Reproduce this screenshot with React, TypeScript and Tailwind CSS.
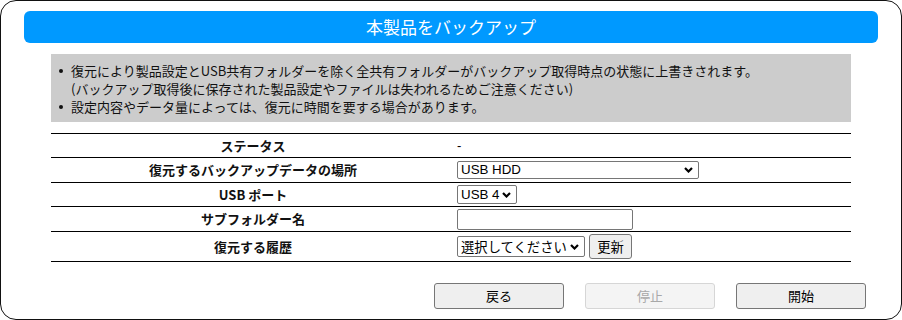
import { ReactNode } from "react"

const jp = "font-['Noto_Sans_CJK_JP',sans-serif]"
const ctl = "font-['Liberation_Sans','Noto_Sans_CJK_JP',sans-serif] text-[13.33px] text-black"

function Chevron() {
    return (
        <svg width="9" height="6" viewBox="0 0 9 6" className="shrink-0">
            <path d="M1 1 L4.5 4.5 L8 1" fill="none" stroke="#000" strokeWidth="2.2" />
        </svg>
    )
}

function FakeSelect({ value, width, height }: { value: string; width: string; height: string }) {
    return (
        <div className={`${width} ${height} ${ctl} flex items-center justify-between border border-[#767676] rounded-[2px] bg-white pl-[3px] pr-[5px] leading-none`}>
            <span className="whitespace-nowrap">{value}</span>
            <Chevron />
        </div>
    )
}

function Row({ label, h, children }: { label: string; h: string; children: ReactNode }) {
    return (
        <div className={`flex items-center border-b border-black ${h}`}>
            <div className="w-[404px] text-center text-[13px] font-bold">{label}</div>
            <div className="flex items-center gap-[4px] pl-[2px]">{children}</div>
        </div>
    )
}

export default function App() {
    const notes = [
        ["復元により製品設定とUSB共有フォルダーを除く全共有フォルダーがバックアップ取得時点の状態に上書きされます。", "(バックアップ取得後に保存された製品設定やファイルは失われるためご注意ください)"],
        ["設定内容やデータ量によっては、復元に時間を要する場合があります。"],
    ]

    return (
        <div className={`w-[902px] h-[320px] bg-white ${jp} text-[#111]`}>
            <div className="w-[902px] h-[320px] border border-[#111] rounded-[16px]">
                <div className="ml-[23px] mt-[10px] w-[854px] h-[32px] rounded-[6px] bg-[#0099ff] flex items-center justify-center text-white text-[17px]">
                    本製品をバックアップ
                </div>

                <div className="ml-[50px] mt-[11px] w-[800px] bg-[#cccccc] pt-[8px] pb-[6px] text-[13px] leading-[18px]">
                    {notes.map((lines, i) => (
                        <div key={i} className="flex">
                            <div className="w-[20px] h-[18px] flex items-center justify-center">
                                <span className="w-[4px] h-[4px] rounded-full bg-[#111]" />
                            </div>
                            <div>
                                {lines.map((l) => (
                                    <div key={l}>{l}</div>
                                ))}
                            </div>
                        </div>
                    ))}
                </div>

                <div className="ml-[50px] mt-[11px] w-[800px] border-t border-black">
                    <Row label="ステータス" h="h-[24px]">
                        <span className={`${ctl} text-[13px]`}>-</span>
                    </Row>
                    <Row label="復元するバックアップデータの場所" h="h-[25px]">
                        <FakeSelect value="USB HDD" width="w-[242px]" height="h-[18px]" />
                    </Row>
                    <Row label="USB ポート" h="h-[24px]">
                        <FakeSelect value="USB 4" width="w-[60px]" height="h-[19px]" />
                    </Row>
                    <Row label="サブフォルダー名" h="h-[25px]">
                        <input className="w-[176px] h-[21px] border border-[#767676] rounded-[2px] bg-white" />
                    </Row>
                    <Row label="復元する履歴" h="h-[30px]">
                        <div className={`w-[128px] h-[21px] flex items-center justify-between border border-[#767676] rounded-[2px] bg-white pl-[3px] pr-[5px] ${jp} text-[13.33px] text-black`}>
                            <span className="whitespace-nowrap">選択してください</span>
                            <Chevron />
                        </div>
                        <button className={`w-[43px] h-[25px] border border-[#767676] rounded-[3px] bg-[#efefef] ${jp} text-[13.33px] text-black`}>
                            更新
                        </button>
                    </Row>
                </div>

                <div className="mt-[21px] flex justify-end gap-[21px] pr-[35px]">
                    <button className="w-[130px] h-[26px] border border-[#767676] rounded-[3px] bg-[#efefef] text-[13px] text-black">戻る</button>
                    <button disabled className="w-[130px] h-[26px] border border-[#d6d6d6] rounded-[3px] bg-[#f4f4f4] text-[13px] text-[#a8a8a8]">停止</button>
                    <button className="w-[130px] h-[26px] border border-[#767676] rounded-[3px] bg-[#efefef] text-[13px] text-black">開始</button>
                </div>
            </div>
        </div>
    )
}
